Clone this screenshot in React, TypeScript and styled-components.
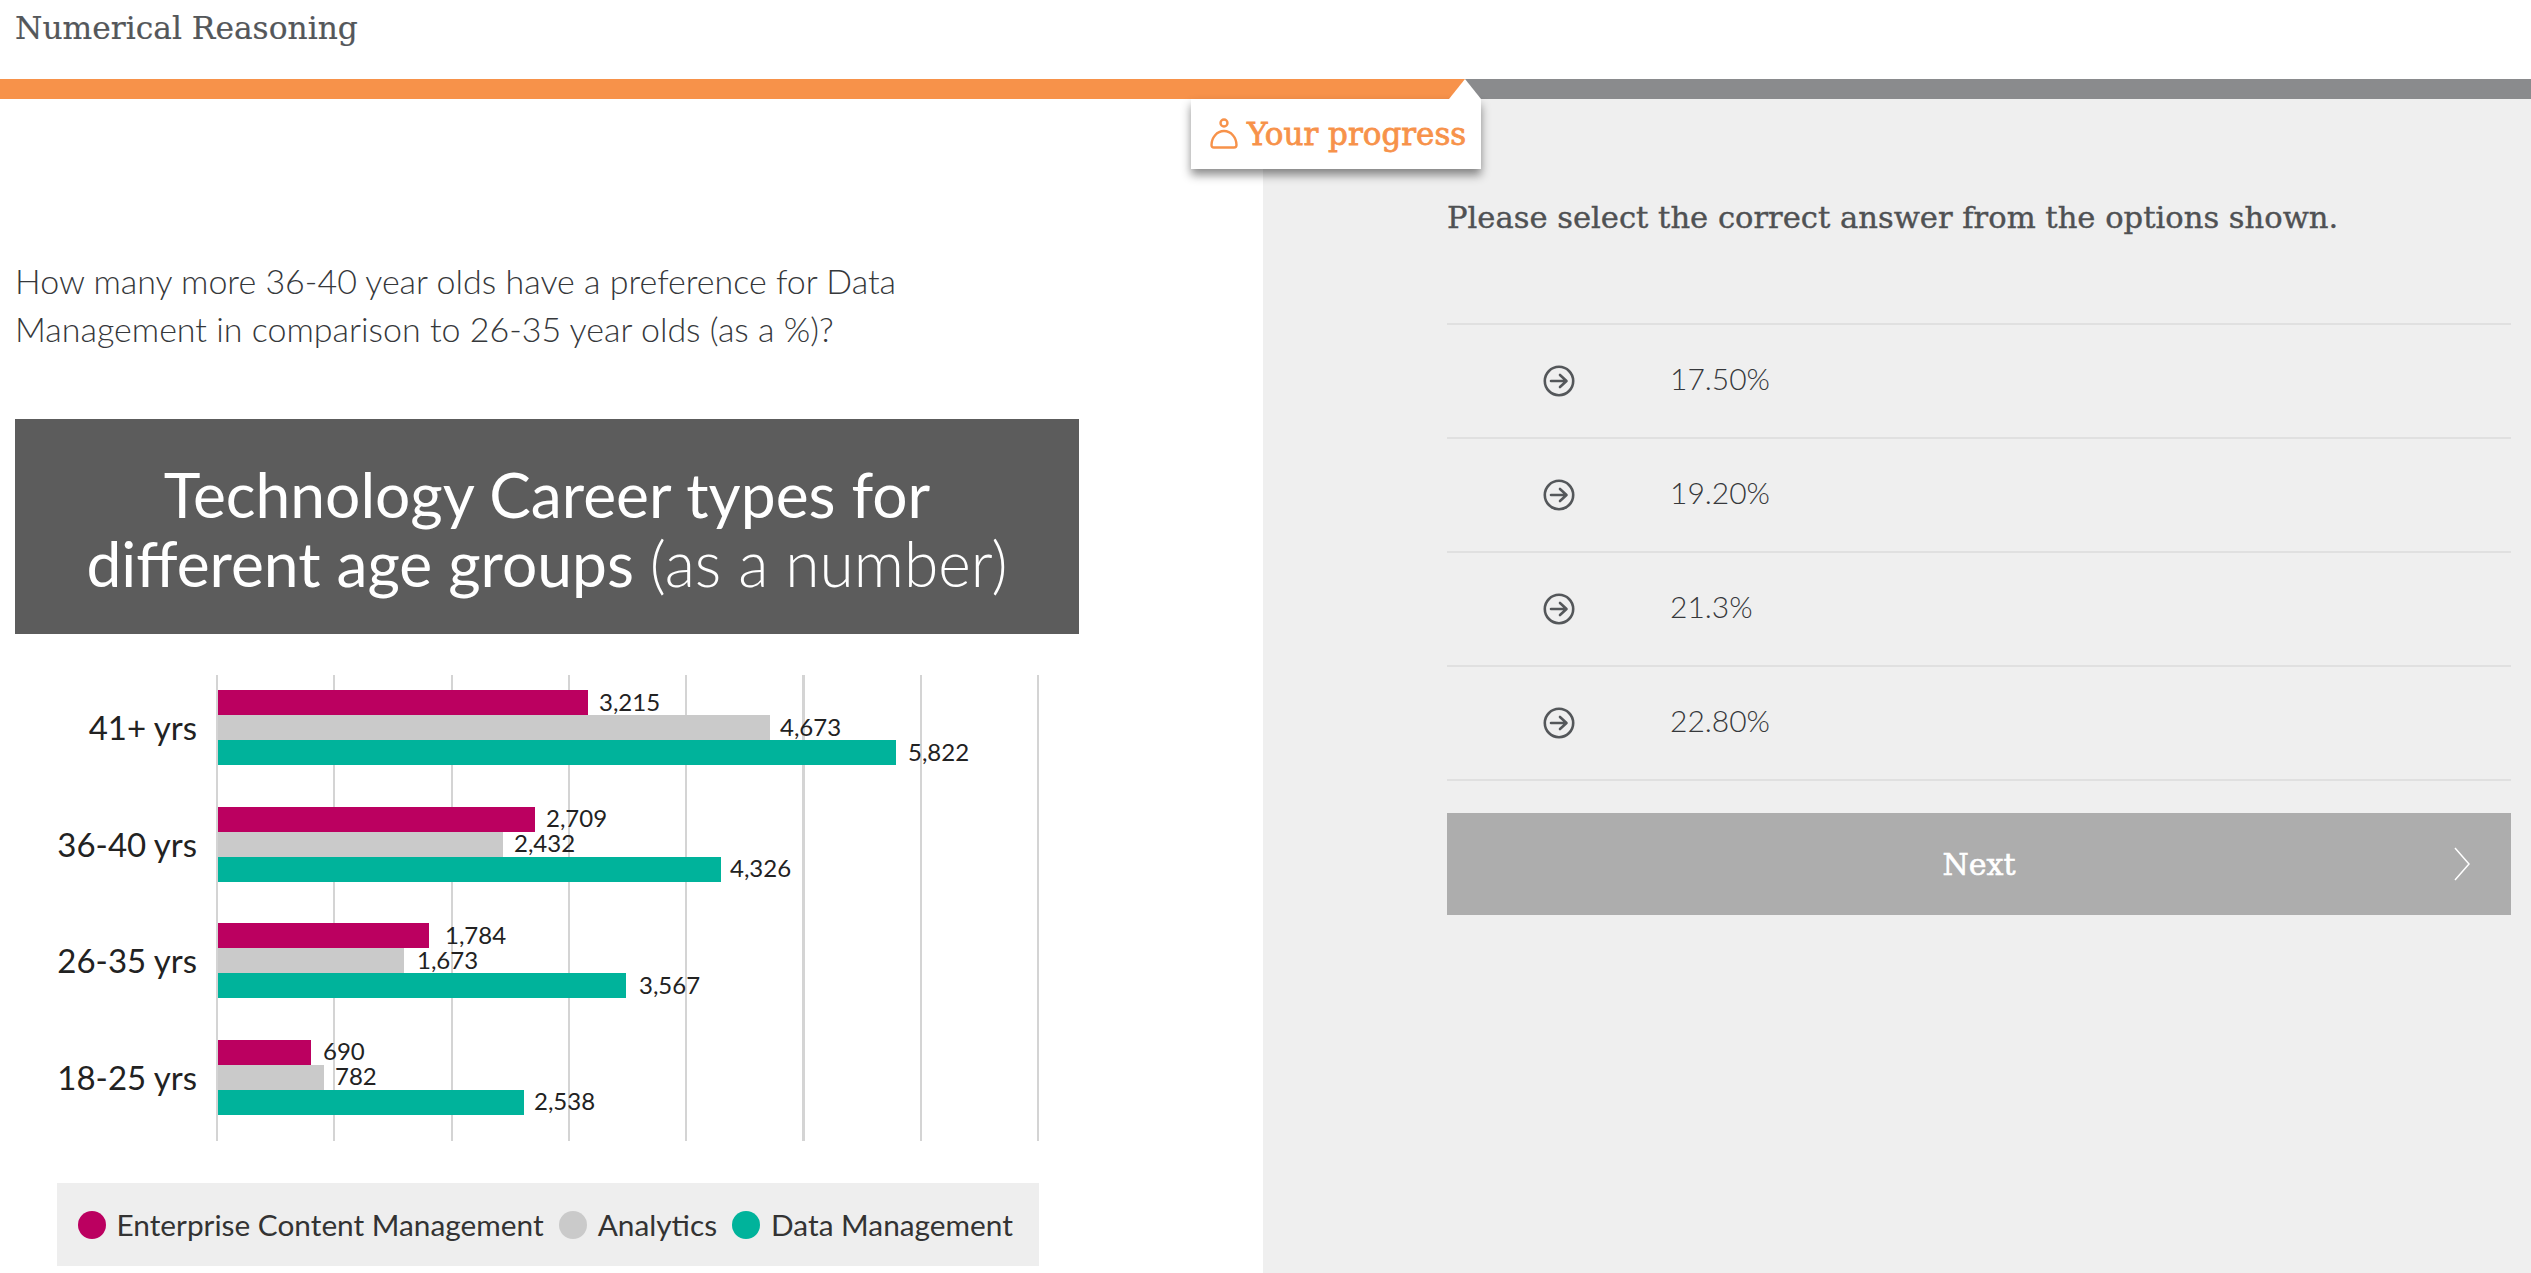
import * as React from "react";
import styled, { createGlobalStyle } from "styled-components";

const SANS = `Lato, "Open Sans", "Liberation Sans", sans-serif`;
const SLAB = `"DejaVu Serif", "Liberation Serif", serif`;

interface ISeriesValue {
  label: string;
  width: number;
  gap: number;
}

interface IAgeGroup {
  name: string;
  values: ISeriesValue[];
}

const SERIES_COLORS = ["#bb0060", "#cacaca", "#00b39b"];

const AGE_GROUPS: IAgeGroup[] = [
  {
    name: "41+ yrs",
    values: [
      { label: "3,215", width: 370, gap: 11 },
      { label: "4,673", width: 552, gap: 10 },
      { label: "5,822", width: 678, gap: 12 }
    ]
  },
  {
    name: "36-40 yrs",
    values: [
      { label: "2,709", width: 317, gap: 11 },
      { label: "2,432", width: 285, gap: 11 },
      { label: "4,326", width: 503, gap: 9 }
    ]
  },
  {
    name: "26-35 yrs",
    values: [
      { label: "1,784", width: 211, gap: 16 },
      { label: "1,673", width: 186, gap: 13 },
      { label: "3,567", width: 408, gap: 13 }
    ]
  },
  {
    name: "18-25 yrs",
    values: [
      { label: "690", width: 93, gap: 12 },
      { label: "782", width: 106, gap: 11 },
      { label: "2,538", width: 306, gap: 10 }
    ]
  }
];

const ANSWERS = ["17.50%", "19.20%", "21.3%", "22.80%"];

const LEGEND = [
  { label: "Enterprise Content Management", color: SERIES_COLORS[0] },
  { label: "Analytics", color: SERIES_COLORS[1] },
  { label: "Data Management", color: SERIES_COLORS[2] }
];

const ArrowCircle = () => (
  <svg width="32" height="32" viewBox="0 0 32 32" fill="none">
    <circle cx="16" cy="16" r="14.2" stroke="#54575a" strokeWidth="2.6" />
    <path
      d="M8 16h15M17 10l6.500 6-6.500 6"
      stroke="#54575a"
      strokeWidth="2.6"
      strokeLinecap="round"
      strokeLinejoin="round"
    />
  </svg>
);

const ProgressIcon = () => (
  <svg width="28" height="32" viewBox="0 0 28 32" fill="none">
    <circle cx="14" cy="5" r="3.500" stroke="#f7924a" strokeWidth="2.4" />
    <path
      d="M4 29.500c-1.600 0-2.500-1-2.500-2.500C1.500 19.500 7 13 14 13s12.500 6.500 12.500 14c0 1.500-.9 2.500-2.500 2.500z"
      stroke="#f7924a"
      strokeWidth="2.4"
      strokeLinejoin="round"
    />
  </svg>
);

const Chevron = () => (
  <svg width="18" height="34" viewBox="0 0 18 34" fill="none">
    <path d="M2 1l14 16-14 16" stroke="#fff" strokeWidth="1.5" />
  </svg>
);

export default function App() {
  return (
    <PageRoot>
      <GlobalStyle />
      <Header>Numerical Reasoning</Header>
      <ProgressTrack>
        <ProgressFill />
        <ProgressTip>
          <ProgressIcon />
          Your progress
        </ProgressTip>
      </ProgressTrack>
      <Main>
        <QuestionPanel>
          <Question>
            How many more 36-40 year olds have a preference for Data
            <br />
            Management in comparison to 26-35 year olds (as a %)?
          </Question>
          <ChartBanner>
            Technology Career types for
            <br />
            different age groups <small>(as a number)</small>
          </ChartBanner>
          <Chart>
            <CategoryColumn>
              {AGE_GROUPS.map(g => (
                <Category key={g.name}>{g.name}</Category>
              ))}
            </CategoryColumn>
            <Plot>
              {AGE_GROUPS.map(g => (
                <BarGroup key={g.name}>
                  {g.values.map((v, i) => (
                    <BarRow key={i}>
                      <Bar $color={SERIES_COLORS[i]} $width={v.width} />
                      <BarValue $gap={v.gap}>{v.label}</BarValue>
                    </BarRow>
                  ))}
                </BarGroup>
              ))}
            </Plot>
          </Chart>
          <Legend>
            {LEGEND.map(l => (
              <LegendItem key={l.label}>
                <LegendDot $color={l.color} />
                {l.label}
              </LegendItem>
            ))}
          </Legend>
        </QuestionPanel>
        <AnswerPanel>
          <Instruction>Please select the correct answer from the options shown.</Instruction>
          <AnswerList>
            {ANSWERS.map(a => (
              <AnswerRow key={a}>
                <AnswerIcon>
                  <ArrowCircle />
                </AnswerIcon>
                <AnswerLabel>{a}</AnswerLabel>
              </AnswerRow>
            ))}
          </AnswerList>
          <NextButton>
            Next
            <NextChevron>
              <Chevron />
            </NextChevron>
          </NextButton>
        </AnswerPanel>
      </Main>
    </PageRoot>
  );
}

const GlobalStyle = createGlobalStyle`
  html, body {
    margin: 0;
    padding: 0;
    background: #fff;
    overflow: hidden;
  }
`;

const PageRoot = styled.div`
  display: flex;
  flex-direction: column;
  height: 100vh;
  font-family: ${SANS};
  overflow: hidden;
`;

const Header = styled.div`
  height: 79px;
  padding: 6px 0 0 15px;
  box-sizing: border-box;
  font-family: ${SLAB};
  font-size: 31.3px;
  line-height: 44px;
  -webkit-text-stroke: 0.2px #54575a;
  color: #54575a;
`;

const ProgressTrack = styled.div`
  position: relative;
  flex: none;
  height: 20px;
  background: #8a8b8d;
`;

const ProgressFill = styled.div`
  height: 100%;
  width: 1465px;
  background: #f7924a;
`;

const ProgressTip = styled.div`
  position: absolute;
  z-index: 2;
  top: 20px;
  left: 1191px;
  width: 290px;
  height: 70px;
  display: flex;
  align-items: center;
  gap: 9px;
  padding-left: 19px;
  box-sizing: border-box;
  background: #fff;
  box-shadow: 0 6px 9px rgba(0, 0, 0, 0.45);
  font-family: ${SLAB};
  font-weight: 400;
  font-size: 31px;
  -webkit-text-stroke: 0.8px #f7924a;
  white-space: nowrap;
  color: #f7924a;

  &::before {
    content: "";
    position: absolute;
    left: 258px;
    top: -20px;
    border-left: 16px solid transparent;
    border-right: 16px solid transparent;
    border-bottom: 20px solid #fff;
  }
`;

const Main = styled.div`
  flex: 1;
  display: flex;
  min-height: 0;
`;

const QuestionPanel = styled.div`
  flex: none;
  width: 1263px;
  box-sizing: border-box;
  padding: 158px 0 0 15px;
`;

const Question = styled.div`
  font-size: 34px;
  font-weight: 300;
  line-height: 48px;
  color: #36383b;
  white-space: nowrap;
`;

const ChartBanner = styled.div`
  margin-top: 66px;
  width: 1064px;
  height: 215px;
  padding-top: 41px;
  box-sizing: border-box;
  background: #5c5c5c;
  color: #fff;
  text-align: center;
  font-size: 62.3px;
  font-weight: 400;
  line-height: 69px;
  white-space: nowrap;

  small {
    font-size: inherit;
    font-weight: 300;
  }
`;

const Chart = styled.div`
  display: flex;
  margin-top: 41px;
`;

const CategoryColumn = styled.div`
  flex: none;
  width: 182px;
  margin-right: 19px;
  padding-top: 15px;
  display: flex;
  flex-direction: column;
  gap: 41.5px;
`;

const Category = styled.div`
  height: 75px;
  line-height: 75px;
  text-align: right;
  font-size: 33px;
  color: #222;
  white-space: nowrap;
`;

const Plot = styled.div`
  flex: none;
  width: 824px;
  height: 466px;
  padding: 15px 0 0 2px;
  box-sizing: border-box;
  display: flex;
  flex-direction: column;
  gap: 41.5px;
  background: repeating-linear-gradient(to right, #d4d4d4 0 2px, transparent 2px 117.3px);
`;

const BarGroup = styled.div`
  display: flex;
  flex-direction: column;
`;

const BarRow = styled.div`
  display: flex;
  align-items: center;
  height: 25px;
`;

const Bar = styled.div<{ $color: string; $width: number }>`
  height: 100%;
  width: ${p => p.$width}px;
  background: ${p => p.$color};
`;

const BarValue = styled.span<{ $gap: number }>`
  margin-left: ${p => p.$gap}px;
  padding-bottom: 2px;
  font-size: 24px;
  line-height: 24px;
  color: #222;
`;

const Legend = styled.div`
  display: flex;
  align-items: center;
  gap: 15px;
  margin: 42px 0 0 41.5px;
  width: 982.5px;
  height: 83px;
  padding-left: 21px;
  box-sizing: border-box;
  background: #eeeeee;
  white-space: nowrap;
`;

const LegendItem = styled.div`
  display: flex;
  align-items: center;
  gap: 11px;
  font-size: 29.8px;
  color: #333;
`;

const LegendDot = styled.span<{ $color: string }>`
  width: 28px;
  height: 28px;
  border-radius: 50%;
  background: ${p => p.$color};
`;

const AnswerPanel = styled.div`
  flex: 1;
  padding: 95px 20px 0 184px;
  background: #efefef;
`;

const Instruction = styled.div`
  font-family: ${SLAB};
  font-size: 30.6px;
  line-height: 48px;
  -webkit-text-stroke: 0.4px #4f5153;
  color: #4f5153;
  white-space: nowrap;
`;

const AnswerList = styled.div`
  margin-top: 81px;
  border-top: 2px solid #e0e0e0;
`;

const AnswerRow = styled.div`
  display: flex;
  align-items: center;
  height: 112px;
  border-bottom: 2px solid #e0e0e0;
`;

const AnswerIcon = styled.span`
  display: flex;
  margin: 0 95px 0 96px;
`;

const AnswerLabel = styled.span`
  padding-bottom: 6px;
  font-size: 30px;
  font-weight: 300;
  color: #36383b;
`;

const NextButton = styled.div`
  position: relative;
  display: flex;
  align-items: center;
  justify-content: center;
  margin-top: 32px;
  height: 102px;
  background: #adadad;
  font-family: ${SLAB};
  font-size: 30px;
  -webkit-text-stroke: 0.6px #fff;
  color: #fff;
`;

const NextChevron = styled.span`
  position: absolute;
  right: 40px;
  top: 34px;
  display: flex;
`;
